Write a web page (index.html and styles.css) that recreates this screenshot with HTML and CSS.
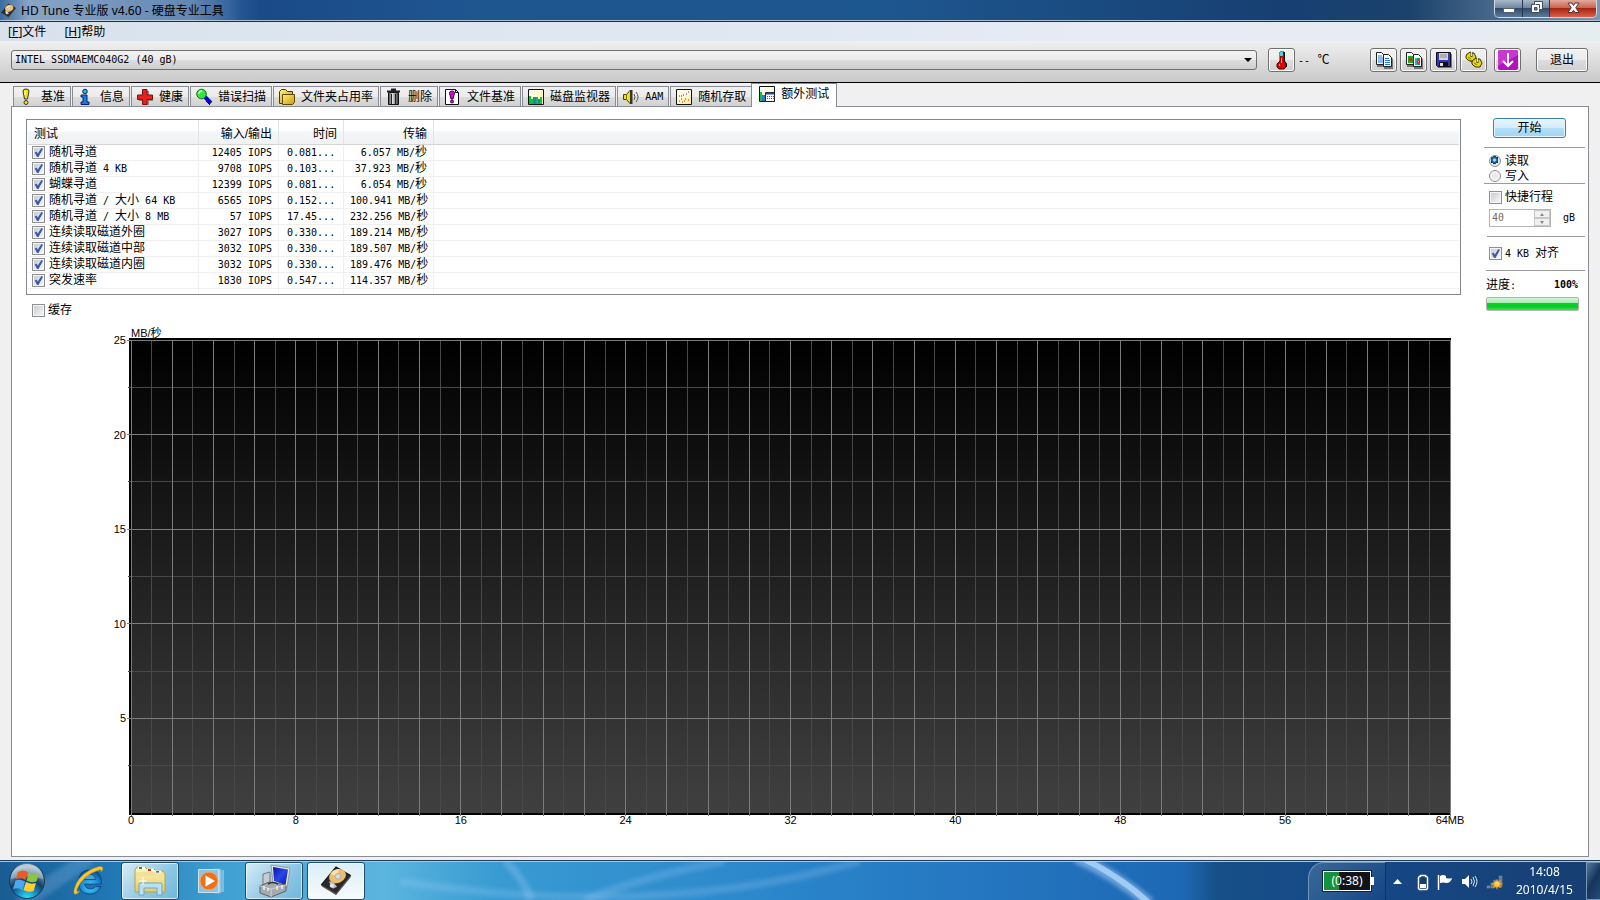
FILE: index.html
```html
<!DOCTYPE html>
<html lang="zh-CN">
<head>
<meta charset="utf-8">
<title>HD Tune 专业版 v4.60</title>
<link rel="stylesheet" href="styles.css">
</head>
<body>
<svg class="defs" width="0" height="0" aria-hidden="true">
  <defs>
    <linearGradient id="gold" x1="0" y1="0" x2="1" y2="1"><stop offset="0" stop-color="#fff27a"/><stop offset="1" stop-color="#c99a10"/></linearGradient>
    <linearGradient id="cream" x1="0" y1="0" x2="1" y2="1"><stop offset="0" stop-color="#fff"/><stop offset="1" stop-color="#ffef9a"/></linearGradient>
    <linearGradient id="steel" x1="0" y1="0" x2="1" y2="0"><stop offset="0" stop-color="#444"/><stop offset=".4" stop-color="#ddd"/><stop offset="1" stop-color="#333"/></linearGradient>
    <linearGradient id="plotfill" x1="0" y1="0" x2="0" y2="1"><stop offset="0" stop-color="#000"/><stop offset="1" stop-color="#404040"/></linearGradient>
    <radialGradient id="orb" cx=".5" cy="1" r=".9"><stop offset="0" stop-color="#2fe4ff"/><stop offset=".4" stop-color="#1579ad"/><stop offset=".6" stop-color="#123f68"/><stop offset="1" stop-color="#9db7c8"/></radialGradient>
    <radialGradient id="ie" cx=".5" cy=".7" r=".7"><stop offset="0" stop-color="#52d0fa"/><stop offset=".6" stop-color="#1884d0"/><stop offset="1" stop-color="#0b4a90"/></radialGradient>
    <linearGradient id="screen" x1="0" y1="0" x2="1" y2="1"><stop offset="0" stop-color="#0613a8"/><stop offset=".5" stop-color="#2a48e8"/><stop offset="1" stop-color="#0613a8"/></linearGradient>
    <linearGradient id="folder" x1="0" y1="0" x2="0" y2="1"><stop offset="0" stop-color="#fdf6c0"/><stop offset="1" stop-color="#e8ca62"/></linearGradient>
    <filter id="soft" x="-20%" y="-50%" width="140%" height="200%"><feGaussianBlur stdDeviation="2"/></filter>
    <symbol id="disk" viewBox="0 0 30 28">
      <path d="M15 1 29 9 15 27 1 18z" fill="#2a2a2c" stroke="#111"/>
      <path d="M1 18v1.500l14 8.500 14-17V9L15 26z" fill="#555"/>
      <ellipse cx="16.500" cy="10" rx="8.500" ry="6.500" transform="rotate(-25 16 10)" fill="#f0bd70"/>
      <path d="M10 8a9 7 0 0 1 8-5l-2 7z" fill="#fbe1b2"/>
      <circle cx="17" cy="10" r="2.800" fill="#d8d8d8" stroke="#999" stroke-width=".6"/>
      <path d="M8 15l4 0 4 5-4 2z" fill="#bbb"/>
      <circle cx="11" cy="19" r="2" fill="#e8e8e8"/>
    </symbol>
  </defs>
</svg>

<header class="titlebar">
  <div class="title"><svg width="15" height="15"><use href="#disk"/></svg><h1>HD Tune 专业版 v4.60 - 硬盘专业工具</h1></div>
  <div class="winbtns">
    <button type="button" aria-label="最小化" class="min"><svg width="12" height="12"><rect x=".5" y="6.500" width="11" height="4" fill="#fff" stroke="#555d70"/></svg></button>
    <button type="button" aria-label="还原" class="res"><svg width="13" height="13"><path d="M4.500.5h8v8h-3v3h-8v-8h3z" fill="#fff" stroke="#434a5d"/><path d="M4.500 6.500h2.500v2.500h-2.500z" fill="#6c7c95" stroke="#434a5d"/><path d="M5.500 3.500h4v4" fill="none" stroke="#434a5d"/></svg></button>
    <button type="button" aria-label="关闭" class="cls"><svg width="13" height="12"><path d="M1 1h4l1.500 2.500L8 1h4L8.800 5.800 12 10.500H8L6.500 8.200 5 10.500H1l3.200-4.700z" fill="#fff" stroke="#5a3030"/></svg></button>
  </div>
</header>

<nav class="menu"><a href="#file">[<u>F</u>]文件</a><a href="#help">[<u>H</u>]帮助</a></nav>

<section class="toolbar">
  <div class="drive"><select class="m" aria-label="驱动器"><option>INTEL SSDMAEMC040G2 (40 gB)</option></select></div>
  <button type="button" class="tool" aria-label="温度"><svg width="16" height="20"><path d="M6 2h4v9l2 3v3l-2 2H5l-2-2v-3l3-3z" fill="#d80808" stroke="#400"/><path d="M6 2h3v4H6z" fill="#39d8e0"/><path d="M10.500 2v9l2 3v3" fill="none" stroke="#000"/><path d="M7.500 8v5M5.500 14v2" stroke="#ff8d80"/></svg></button>
  <span class="temp"><span class="m">--</span> ℃</span>
  <div class="tools">
    <button type="button" class="tool" aria-label="复制文本"><svg width="18" height="18"><path d="M2 3h6l3 3v10H2z" fill="#777"/><path d="M1.500 1.500h5l3 3v9h-8z" fill="#fff" stroke="#222"/><path d="M3 5h4M3 7h5M3 9h5M3 11h5" stroke="#1878e8"/><path d="M9 5h6l3 3v10H9z" fill="#777"/><path d="M8.500 3.500h5l3 3v9h-8z" fill="#fff" stroke="#222"/><path d="M10 7.500h4M10 9.500h5M10 11.500h5M10 13.500h5" stroke="#1878e8"/></svg></button>
    <button type="button" class="tool" aria-label="复制图像"><svg width="18" height="18"><path d="M2 3h6l3 3v10H2z" fill="#777"/><path d="M1.500 1.500h5l3 3v9h-8z" fill="#fff" stroke="#222"/><path d="M3 5h5v7H3z" fill="#10b020"/><path d="M4 7h3v3H4z" fill="#f02010"/><path d="M9 5h6l3 3v10H9z" fill="#777"/><path d="M8.500 3.500h5l3 3v9h-8z" fill="#fff" stroke="#222"/><path d="M10 7h5v7h-5z" fill="#10b020"/><path d="M10 7h2v7h-2z" fill="#28a8e8"/><path d="M12 9h3v3h-3z" fill="#f02010"/><path d="M13 10h1v1h-1z" fill="#ff0"/></svg></button>
    <button type="button" class="tool" aria-label="保存"><svg width="18" height="18"><path d="M3 3h14v14H3z" fill="#777"/><path d="M1.500 1.500h14v14h-13l-1-1z" fill="#3138c8" stroke="#111"/><path d="M4 2h9v7H4z" fill="#d4d4cc"/><path d="M5 4h7M5 6h7" stroke="#888"/><path d="M4 11h9v5H4z" fill="#111"/><path d="M5 12h3v3H5z" fill="#ddd"/></svg></button>
    <button type="button" class="tool" aria-label="选项"><svg width="18" height="18"><path d="M3 8l6 6 6 2 2-3-6-6z" fill="#777"/><g fill="#e6d800" stroke="#3a3500"><path d="M2 3l2-1 1-1 2 1 2 0 1 2 1 2-1 2-1 2-2 0-2 0-2-1-2-2 0-2z"/><path d="M8 9l2-1 1-1 2 1 2 0 1 2 1 2-1 2-1 2-2 0-2 0-2-1-2-2 0-2z"/></g><path d="M6.500 1v5M12.500 7v5" stroke="#444" stroke-width="2"/><path d="M6.500 1v4M12.500 7v4" stroke="#ddd"/><path d="M3 6l3 2M9 12l3 2" stroke="#8a8000"/></svg></button>
    <button type="button" class="tool update" aria-label="更新"><svg width="20" height="20"><rect width="20" height="20" rx="2" fill="#b511bd"/><path d="M0 0h20v5L0 16z" fill="#d455d8" opacity=".6"/><path d="M10 3v12M5 11l5 5 5-5" fill="none" stroke="#fff" stroke-width="2"/></svg></button>
    <button type="button" class="tool exit">退出</button>
  </div>
</section>

<nav class="tabs">
  <button type="button"><svg width="16" height="18"><path d="M4 3q0-2 3-2t3 2L8.500 11h-3z" fill="#f0e800" stroke="#333"/><path d="M6 3v4" stroke="#fff"/><circle cx="7" cy="14.500" r="2" fill="#f0e800" stroke="#333"/></svg>基准</button>
  <button type="button"><svg width="16" height="18"><path d="M4 7h5v7h2v2.500H3V14h2V9H3V7z" fill="#1478f0" stroke="#102060"/><circle cx="7" cy="3.500" r="2.300" fill="#18b8e8" stroke="#102060"/></svg>信息</button>
  <button type="button"><svg width="16" height="18"><path d="M7 3h5v5h4v5h-4v4H7v-4H2V8h5z" fill="#888"/><path d="M5.500 1.500H10V7h5.500v4.500H10v5H5.500v-5H.500V7h5z" fill="#ea2020" stroke="#801010"/></svg>健康</button>
  <button type="button"><svg width="16" height="18"><path d="M9 9l6 6" stroke="#0808c0" stroke-width="4"/><path d="M10 13l4 4" stroke="#111"/><circle cx="5.500" cy="6" r="4.800" fill="#30e838" stroke="#187020"/><path d="M3 6q0-3 3-3" stroke="#d8ffe0" fill="none" stroke-width="1.500"/></svg>错误扫描</button>
  <button type="button"><svg width="16" height="18"><path d="M.500 15.500v-12l2-2h4l2 2h5v12z" fill="url(#gold)" stroke="#4c3b00"/><path d="M3.500 16.500v-10h12v8l-2 2z" fill="url(#gold)" stroke="#5a4800"/></svg>文件夹占用率</button>
  <button type="button"><svg width="16" height="18"><path d="M2.500 4.500h10v12h-10z" fill="url(#steel)" stroke="#111"/><path d="M1 3.500h13M5 1.500h5" stroke="#222" stroke-width="2"/><path d="M5.500 6v10M9.500 6v10" stroke="#222"/></svg>删除</button>
  <button type="button"><svg width="16" height="18"><path d="M.500 1.500h10l3 3v12H.500z" fill="#fff" stroke="#111"/><path d="M10.500 1.500v3h3" fill="none" stroke="#111"/><path d="M4.500 5q0-2 2.500-2t2.500 2L8 11H6z" fill="#d010d0" stroke="#400040"/><circle cx="7" cy="13.500" r="1.500" fill="#d010d0" stroke="#400040"/></svg>文件基准</button>
  <button type="button"><svg width="16" height="18"><path d="M.500 1.500h15v15H.500z" fill="url(#cream)" stroke="#111"/><path d="M1 8h2v8H1zM3 11h2v5H3zM8 9h2v7H8zM12 9h2v7h-2z" fill="#00c838"/><path d="M5 9h3v7H5zM10 11h2v5h-2z" fill="#3878c0"/></svg>磁盘监视器</button>
  <button type="button"><svg width="16" height="18"><path d="M.500 6.500h3l4-4.500v14l-4-4.500h-3z" fill="#f0e020" stroke="#4a4000"/><path d="M8.500 2v14" stroke="#333" stroke-width="2"/><path d="M3.500 7v4" stroke="#806c00"/><path d="M11 6q2 3 0 6M13 4q4 5 0 10" stroke="#555" fill="none"/></svg><span class="m">AAM</span></button>
  <button type="button"><svg width="16" height="18"><path d="M.500 1.500h15v15H.500z" fill="url(#cream)" stroke="#111"/><path d="M3 13h1M6 14h1M5 11h1M9 11h1M8 13h1M12 12h1" stroke="#e01010"/><path d="M3 8h1M7 7h1M10 6h1M12 4h1M5 8h1" stroke="#2030e0"/></svg>随机存取</button>
  <button type="button" class="active"><svg width="16" height="18"><path d="M.500 1.500h15v15H.500z" fill="url(#cream)" stroke="#111"/><path d="M1 7h2v9H1z" fill="#00c838"/><path d="M3 10h3v6H3z" fill="#3878c0"/><path d="M6.500 7.500h9v9h-9z" fill="#fff" stroke="#222"/><path d="M7 8.500h8" stroke="#2040c0" stroke-width="2"/><path d="M8 11.500h7M8 13.500h7" stroke="#d02020" stroke-dasharray="1 1"/></svg>额外测试</button>
</nav>

<main class="panel">
  <div class="left">
    <div class="list">
      <table>
        <colgroup><col class="c1"><col class="c2"><col class="c3"><col class="c4"><col></colgroup>
        <thead><tr><th>测试</th><th>输入/输出</th><th>时间</th><th>传输</th><th></th></tr></thead>
        <tbody>
        <tr><td><label><input type="checkbox" checked><span>随机寻道</span></label></td><td>12405 IOPS</td><td>0.081...</td><td>6.057 MB/<b>秒</b></td><td></td></tr>
        <tr><td><label><input type="checkbox" checked><span>随机寻道<span class="m"> 4 KB</span></span></label></td><td>9708 IOPS</td><td>0.103...</td><td>37.923 MB/<b>秒</b></td><td></td></tr>
        <tr><td><label><input type="checkbox" checked><span>蝴蝶寻道</span></label></td><td>12399 IOPS</td><td>0.081...</td><td>6.054 MB/<b>秒</b></td><td></td></tr>
        <tr><td><label><input type="checkbox" checked><span>随机寻道<span class="m"> / </span>大小<span class="m"> 64 KB</span></span></label></td><td>6565 IOPS</td><td>0.152...</td><td>100.941 MB/<b>秒</b></td><td></td></tr>
        <tr><td><label><input type="checkbox" checked><span>随机寻道<span class="m"> / </span>大小<span class="m"> 8 MB</span></span></label></td><td>57 IOPS</td><td>17.45...</td><td>232.256 MB/<b>秒</b></td><td></td></tr>
        <tr><td><label><input type="checkbox" checked><span>连续读取磁道外圈</span></label></td><td>3027 IOPS</td><td>0.330...</td><td>189.214 MB/<b>秒</b></td><td></td></tr>
        <tr><td><label><input type="checkbox" checked><span>连续读取磁道中部</span></label></td><td>3032 IOPS</td><td>0.330...</td><td>189.507 MB/<b>秒</b></td><td></td></tr>
        <tr><td><label><input type="checkbox" checked><span>连续读取磁道内圈</span></label></td><td>3032 IOPS</td><td>0.330...</td><td>189.476 MB/<b>秒</b></td><td></td></tr>
        <tr><td><label><input type="checkbox" checked><span>突发速率</span></label></td><td>1830 IOPS</td><td>0.547...</td><td>114.357 MB/<b>秒</b></td><td></td></tr>
        <tr class="rest"><td></td><td></td><td></td><td></td><td></td></tr>
        </tbody>
      </table>
    </div>
    <label class="cache"><input type="checkbox">缓存</label>
    <div class="chart">
      <div class="unit">MB/秒</div>
      <div class="plot"><svg id="plot" role="img" aria-label="传输速率图"><rect width="100%" height="100%" fill="url(#plotfill)"/></svg></div>
    </div>
  </div>
  <aside class="side">
    <button type="button" class="start">开始</button>
    <div class="group radios">
      <label><input type="radio" name="mode" checked>读取</label>
      <label><input type="radio" name="mode">写入</label>
    </div>
    <div class="group stroke">
      <label><input type="checkbox">快捷行程</label>
      <div class="size m"><span class="spin"><input type="text" value="40" aria-label="容量" disabled><span class="arrows"><button type="button" aria-label="增加" disabled></button><button type="button" aria-label="减少" disabled></button></span></span><span>gB</span></div>
    </div>
    <div class="group align"><label><input type="checkbox" checked><span><span class="m">4 KB </span>对齐</span></label></div>
    <div class="group prog">
      <div class="row"><span>进度<span class="m">:</span></span><strong class="m">100%</strong></div>
      <div class="bar" role="progressbar" aria-label="进度" aria-valuenow="100"></div>
    </div>
  </aside>
</main>

<footer class="taskbar">
  <svg class="glow" preserveAspectRatio="none" viewBox="0 0 1600 40" aria-hidden="true">
    <g fill="none" stroke="#b8dcff"><g filter="url(#soft)"><path d="M400 21q260 40 460-21" stroke-width="8" opacity=".2"/><path d="M585 40q50-22 140-40" stroke-width="8" opacity=".2"/><path d="M505 0q20 20 26 40" stroke-width="8" opacity=".25"/><path d="M1076-4q40 18 74 48" stroke-width="12" opacity=".5"/><path d="M20 44 90-4" stroke-width="16" opacity=".2"/></g><path d="M1080-4q38 18 70 48" stroke-width="6" opacity=".7"/></g>
  </svg>
  <button type="button" class="orb" aria-label="开始菜单"><svg width="38" height="38" viewBox="0 0 38 38"><circle cx="19" cy="19" r="17.500" fill="url(#orb)" stroke="#143a58"/><path d="M3 17a16 16 0 0 1 32 0q-15-5-32 0z" fill="#fff" opacity=".3"/><path d="M10 10q5-3 10 0l-2.500 8q-4-3-9.500-1z" fill="#ee5a24"/><path d="M21 11q5 3 10 0l-2.500 8.500q-5 2-10-1z" fill="#8cc63c"/><path d="M7.500 18.500q5-2 9.500 1L14.500 28q-4-3-9.500-1z" fill="#4aa8f0"/><path d="M18 20q5 3 10 1l-2.500 8q-5 2-10-1z" fill="#ffd030"/></svg></button>
  <button type="button" class="task plain ie" aria-label="Internet Explorer"><svg width="34" height="34" viewBox="0 0 34 34"><path d="M29.500 20H12.500q1 5 6 5 3.500 0 5-2.500h5.500Q26 30 18 30 6.500 30 6.500 18T18 6q12 0 11.500 14z" fill="url(#ie)" stroke="#083a78" stroke-width=".7"/><path d="M12.500 15.500h11q-.800-5-5.500-5t-5.500 5z" fill="#48a5d8" stroke="#083a78" stroke-width=".7"/><path d="M8 27Q1 34 2 26 5 13 18 6q12-6 13-2 0 2-2 4 1-3-2-2Q11 11 5 25q-1 4 3 2z" fill="#f8c62c" stroke="#c98a08" stroke-width=".5"/></svg></button>
  <button type="button" class="task open" aria-label="资源管理器"><svg width="34" height="32" viewBox="0 0 34 32"><path d="M2 27V5l2-3h8l2 2h7l2 2h7l2 3v18z" fill="url(#folder)" stroke="#c0a040"/><path d="M5 3h7M14 5h7M22 7h6" stroke="#fff" stroke-width="3"/><path d="M6 3h3" stroke="#18a030" stroke-width="2"/><path d="M15 5h3" stroke="#d83018" stroke-width="2"/><path d="M23 7h3" stroke="#2080d8" stroke-width="2"/><path d="M3 8h27M3 10h27" stroke="#eed98a"/><path d="M6 30V19q0-1 2-1h19q2 0 2 1v11h-5v-7H11v7z" fill="#b8e2f4" stroke="#68a8cc"/><path d="M10 12v8M6 16h8" stroke="#fff"/></svg></button>
  <button type="button" class="task plain wmp" aria-label="媒体播放器"><svg width="32" height="30" viewBox="0 0 32 30"><path d="M20 4h8v22h-8z" fill="#7cbede"/><path d="M18 3h7v24h-7z" fill="#a8d8f0" stroke="#6cb0d8"/><path d="M2.500 3.500h20v23h-20z" fill="#8cc4e4" stroke="#c4e4f4"/><circle cx="13" cy="15" r="9" fill="#f07018" stroke="#f8a860"/><path d="M9.500 9.500v11L19 15z" fill="#fff"/></svg></button>
  <button type="button" class="task open" aria-label="工具"><svg width="36" height="34" viewBox="0 0 36 34"><path d="M7 10l7-2v12l-7 2z" fill="#c8ccd0" stroke="#777"/><path d="M15 1l19 3-3 20-14-5z" fill="#e4e4e0" stroke="#999"/><path d="M17 3l15 2.500-2.500 15.500L18 17z" fill="url(#screen)"/><path d="M4 22l9-4 17 3v6l-15 6-11-4z" fill="#a4aab0" stroke="#5c6268"/><path d="M4 22l11 3v8M15 25l15-4" stroke="#d0d4d8" fill="none"/><path d="M12 20q5-3 10 0" stroke="#333" fill="none" stroke-width="1.500"/><path d="M8 22v4M12 24v3M21 22v4M26 21v4" stroke="#eee" stroke-width="1.500"/></svg></button>
  <button type="button" class="task open current" aria-label="HD Tune"><svg width="32" height="29"><use href="#disk"/></svg></button>
  <div class="tray">
    <div class="battery"><span>(0:38)</span></div>
    <div class="icons">
      <svg width="9" height="5"><path d="M4.500 0 9 5H0z" fill="#fff"/></svg>
      <svg width="12" height="18"><path d="M3.500 2.500h5v1h1l1 1v11l-1 1h-7l-1-1v-11l1-1h1z" fill="#143c6c" stroke="#fff" stroke-width="1.500"/><path d="M3 11h6v4H3z" fill="#fff"/></svg>
      <svg width="16" height="18"><path d="M1.500 2v15" stroke="#fff" stroke-width="1.500"/><path d="M3 3q3-2 6 0v2q3 1 6 0-1 5-6 5-2-1-6 0z" fill="#fff"/></svg>
      <svg width="17" height="18"><path d="M1 6h3l4-4v13l-4-4H1z" fill="#fff"/><path d="M10 6q2 3 0 5M12 4q3 4.500 0 9M14 3q4 5.500 0 11" fill="none" stroke="#dce8f4"/></svg>
      <svg width="17" height="18"><path d="M1 15h3v-2H1zM5 15h3v-5H5zM9 14h3V7H9zM13 14h3V3h-3z" fill="#68788c" stroke="#8a98a8" stroke-width=".5"/><path d="M11 6l1 2.500L15 7l-1 2.500 3 1.500-3 1 1 3-3-1-1 3-1-3-3 1 1-3-3-1 3-1.500L7 7l3 1.500z" fill="#f6a010"/><circle cx="11" cy="11" r="2.500" fill="#ffd060"/></svg>
    </div>
    <div class="clock"><time>14:08</time><time>2010/4/15</time></div>
    <button type="button" class="desk" aria-label="显示桌面"></button>
  </div>
</footer>
<script src="chart.js"></script>
</body>
</html>
```
FILE: styles.css
```css
* { box-sizing: border-box; }
body {
  margin: 0; height: 100vh; min-height: 600px; display: flex; flex-direction: column;
  background: #f0f0f0; color: #000;
  font: 12px/16px "Liberation Sans", "Noto Sans CJK SC", sans-serif;
}
button, input, select { font: inherit; color: inherit; margin: 0; padding: 0; }
svg { display: block; flex: none; }
.defs { position: absolute; }
.m { font-family: "DejaVu Sans Mono", "Noto Sans CJK SC", monospace; font-size: 10px; white-space: pre; }

.titlebar {
  display: flex; justify-content: space-between; height: 22px; flex: none;
  background: linear-gradient(90deg, #3c6ba0 0, #2c5c98 230px, #1a4a88 260px, #1e5690 30%, #1d578f 55%, #173f72 80%, #1b426c 88%, #7f97ae 100%);
  border-bottom: 1px solid #1c2c44; box-shadow: inset 0 -1px #a9bfd4;
  font-family: "Noto Sans", "Noto Sans CJK SC", sans-serif;
}
.title { display: flex; align-items: center; gap: 5px; padding: 0 16px 0 1px; background: linear-gradient(90deg, #fff0, #ffffff66 12%, #ffffff40 80%, #fff0); }
.title h1 { margin: 0; font-size: 12px; font-weight: 400; }
.winbtns { display: flex; height: 18px; margin-right: 3px; border: 1px solid #cfdae4; border-top: 0; border-radius: 0 0 5px 5px; overflow: hidden; }
.winbtns button { display: grid; place-items: center; border: 0; border-right: 1px solid #26374c; padding-bottom: 2px; background: linear-gradient(#a9b9c9, #7188a0 45%, #304c6c 50%, #5c7a98); }
.min { width: 28px; }
.res { width: 27px; }
.winbtns .cls { width: 46px; border: 0; background: linear-gradient(#e3a99d, #c96650 45%, #a82412 50%, #d86048); }

.menu { display: flex; gap: 18px; height: 19px; flex: none; padding: 2px 8px 0; background: linear-gradient(90deg, #d9e2ec, #e6ebf4 70%, #e6edf0); font-family: "Noto Sans", "Noto Sans CJK SC", sans-serif; }
.menu a { color: #000; text-decoration: none; }

.toolbar { display: flex; align-items: center; height: 42px; flex: none; padding: 0 12px 4px 11px; background: linear-gradient(#f0f0f0, #c9c9c9); border-bottom: 1px solid #000; }
.drive { position: relative; flex: 1; }
.drive select { appearance: none; display: block; width: 100%; height: 20px; padding: 0 3px; border: 1px solid #707070; border-radius: 3px; background: linear-gradient(#f2f2f2, #ebebeb 50%, #dddddd 50%, #cfcfcf); }
.drive::after { content: ""; position: absolute; right: 5px; top: 8px; border: 4px solid transparent; border-top-color: #000; border-bottom: 0; pointer-events: none; }
.tool { display: grid; place-items: center; width: 27px; height: 24px; border: 1px solid #707070; border-radius: 3px; background: linear-gradient(#f2f2f2, #ebebeb 50%, #dddddd 50%, #cfcfcf); box-shadow: inset 0 0 0 1px #fcfcfc; }
.drive + .tool { margin-left: 11px; }
.temp { width: 72px; margin-left: 3px; padding-top: 1px; }
.temp .m { margin-right: 4px; }
.tools { display: flex; gap: 3px; }
.update { margin-left: 4px; }
.exit { width: 52px; margin-left: 12px; }

.tabs { display: flex; align-items: flex-end; gap: 1px; height: 24px; flex: none; padding-left: 13px; position: relative; z-index: 1; margin-bottom: -1px; }
.tabs button { display: flex; align-items: center; gap: 6px; height: 21px; padding: 0 5px; border: 1px solid #898c95; background: linear-gradient(#f2f2f2, #ebebeb 50%, #dddddd 50%, #d2d2d2); white-space: nowrap; }
.tabs .active { height: 24px; padding: 0 7px 3px; margin-left: -2px; border-bottom: 0; background: #fff; }

.panel { flex: 1; min-height: 0; display: flex; gap: 23px; margin: 0 11px 3px 11px; padding: 12px 2px 0 14px; border: 1px solid #898c95; background: #fff; }
.left { flex: 1; min-width: 0; display: flex; flex-direction: column; }
.list { border: 1px solid #828790; padding: 0 1px; }
table { width: 100%; border-collapse: separate; border-spacing: 0; table-layout: fixed; }
.c1 { width: 171px; } .c2 { width: 80px; } .c3 { width: 65px; } .c4 { width: 90px; }
th { height: 25px; padding: 4px 6px 0; font-weight: 400; text-align: right; border-right: 1px solid #e2e4e8; border-bottom: 1px solid #d5d5d5; background: linear-gradient(#fff 45%, #f4f5f7 50%, #f1f2f4); }
th:first-child { text-align: left; }
td { height: 16px; padding: 0 6px; line-height: 15px; text-align: right; border-right: 1px solid #f0f0f0; border-bottom: 1px solid #f0f0f0; white-space: nowrap; font-family: "DejaVu Sans Mono", "Noto Sans CJK SC", monospace; font-size: 10px; }
td b { font-weight: 400; font-size: 12px; line-height: 15px; }
td:nth-child(3) { padding: 0 8px; }
td:first-child { padding: 0 4px; text-align: left; font-size: 12px; }
td:last-child, th:last-child { border-right: 0; }
.rest td { height: 5px; border-bottom: 0; }
label { display: flex; align-items: center; gap: 3px; }
td label { height: 15px; gap: 4px; }
input[type=checkbox] { appearance: none; position: relative; flex: none; width: 13px; height: 13px; border: 1px solid #8e8f8f; background: linear-gradient(135deg, #c9ccd2, #f6f6f6) content-box, #f4f4f4; padding: 1px; }
input[type=checkbox]:checked::after { content: ""; position: absolute; inset: 1px; background: #3f5aa8; clip-path: polygon(8% 50%, 28% 38%, 42% 62%, 82% 0, 100% 8%, 50% 100%, 34% 100%); }
.cache { margin: 7px 0 0 6px; align-self: flex-start; }

.chart { flex: 1; min-height: 0; display: flex; flex-direction: column; margin: 8px 10px 41px 103px; }
.unit { height: 12px; padding-left: 2px; font-size: 11px; line-height: 14px; }
.plot { flex: 1; min-height: 0; display: flex; background: #000; padding: 2px 1px 2px 2px; }
.plot svg { width: 100%; height: 100%; overflow: visible; }
.plot line { stroke: #484848; stroke-width: 1; shape-rendering: crispEdges; }
.plot .major { stroke: #7c7c7c; }
.plot text { font: 11px "Liberation Sans", sans-serif; text-anchor: middle; }
.plot .y { text-anchor: end; }

.side { width: 101px; flex: none; margin-right: 1px; }
.start { display: block; width: 73px; height: 20px; margin: -1px 0 9px 9px; border: 1px solid #3c7fb1; border-radius: 3px; background: linear-gradient(#e6f5fd, #d2ecfb 50%, #b4e0f7 50%, #9fd5f3); box-shadow: inset 0 0 0 1px #e8f7fe; line-height: 16px; }
.group { border-top: 1px solid #9c9c9c; }
.radios { height: 36px; padding: 5px 5px 0; }
.radios label { height: 15px; gap: 4px; }
input[type=radio] { appearance: none; width: 12px; height: 12px; border: 1px solid #8e8f8f; border-radius: 50%; background: radial-gradient(#e4e4e4, #fff); }
input[type=radio]:checked { background: radial-gradient(circle at 45% 40%, #8fe0ff 0 1px, #1879b0 2px, #0d2f4c 4px, #e4e4e4 4px); }
.stroke { height: 53px; padding: 5px 5px 0; }
.size { display: flex; align-items: center; gap: 12px; margin-top: 4px; }
.spin { display: flex; width: 62px; height: 18px; border: 1px solid #b4b4b4; background: #fff; }
.spin input { flex: 1; min-width: 0; border: 0; padding: 0 2px; background: none; color: #6d6d6d; }
.arrows { display: flex; flex-direction: column; width: 16px; }
.arrows button { display: grid; place-items: center; flex: 1; border: 1px solid #c8c8c8; background: #f0f0f0; }
.arrows button::after { content: ""; border: 2px solid transparent; border-top: 0; border-bottom: 3px solid #888; }
.arrows button + button::after { transform: rotate(180deg); }
.align { height: 34px; margin-left: 3px; padding: 8px 2px 0; }
.prog { margin-left: 2px; padding-top: 6px; }
.row { display: flex; justify-content: space-between; width: 92px; height: 20px; }
.bar { width: 93px; height: 14px; border: 1px solid #b2b2b2; border-radius: 2px; background: linear-gradient(#d2f5d6, #a8eeb0 40%, #06d325 45%, #0cc828 75%, #3be855); }

.taskbar { position: relative; display: flex; align-items: center; height: 40px; flex: none; padding-left: 8px; border-top: 1px solid #1f3c58; box-shadow: inset 0 1px #a4c8e4;
  background: linear-gradient(90deg, #195c94 0, #2078b4 7%, #3fa0d2 14%, #5bb5de 24%, #389bd2 31%, #2a84ca 50%, #2272bc 65%, #1d68b4 74%, #165088 76%, #164886 85%, #163f72 100%); }
.glow { position: absolute; inset: 0; width: 100%; height: 100%; }
.taskbar button { position: relative; border: 0; background: none; }
.orb { width: 38px; }
.task { display: grid; place-items: center; width: 58px; height: 38px; }
.open { border-radius: 3px; }
.taskbar .open { border: 1px solid #1d4c70; background: linear-gradient(135deg, #d8ecf6, #8cc6e4 60%, #70b8dc); box-shadow: inset 0 0 0 1px #ffffffa0; }
.taskbar .current { margin-left: 4px; background: linear-gradient(#dceef6, #f6fbfd); }
.ie { margin: 0 3px 0 14px; }
.wmp { width: 66px; }
.tray { position: relative; display: flex; align-items: center; height: 39px; margin-left: auto; color: #fff; font-family: "Noto Sans", sans-serif; }
.battery { display: flex; align-items: center; height: 38px; width: 78px; padding-left: 14px; border-left: 1px solid #6f95bb; border-top: 1px solid #6f95bb; border-right: 1px solid #10345c; border-radius: 16px 0 0 0; background: linear-gradient(135deg, #5f86ae80, #fff0); }
.battery span { position: relative; width: 48px; height: 20px; border: 1px solid #fff; outline: 1px solid #0c2440; background: linear-gradient(90deg, #14923c 32%, #101418 32%); text-align: center; line-height: 18px; }
.battery span::after { content: ""; position: absolute; right: -4px; top: 5px; width: 3px; height: 8px; background: #fff; }
.icons { display: flex; align-items: center; gap: 8px; padding: 2px 0 0 7px; }
.icons svg:first-child { margin-right: 7px; }
.clock { width: 83px; text-align: center; }
.clock time { display: block; line-height: 18px; }
.desk { width: 14px; height: 38px; }
.tray .desk { border: 1px solid #7894b4; border-right: 0; background: linear-gradient(120deg, #54779c, #14345c 50%, #254c78); }
```
FILE: chart.js
```javascript
const plot = document.getElementById('plot');

function add(name, attrs, text) {
  const el = document.createElementNS('http://www.w3.org/2000/svg', name);
  for (const key in attrs) el.setAttribute(key, attrs[key]);
  if (text) el.textContent = text;
  plot.appendChild(el);
  return el;
}

function grid(major) {
  for (let i = major ? 0 : 1; i <= 64; i += 2) {
    const x = i / 64 * 100 + '%';
    add('line', { x1: x, x2: x, y1: 0, y2: '100%', class: major ? 'major' : '' });
    add('svg', { x: x, y: '100%', overflow: 'visible' })
      .innerHTML = `<line y2="${major ? 3 : 2}" class="${major ? 'major' : ''}"/>`;
  }
  for (let i = major ? 0 : 1; i < 10; i += 2) {
    const y = i * 10 + '%';
    add('line', { x1: major ? -4 : -3, x2: '100%', y1: y, y2: y, class: major ? 'major' : '' });
  }
}

grid(false);
grid(true);

for (let v = 0; v <= 64; v += 8) {
  add('text', { x: v / 64 * 100 + '%', y: '100%', dy: 11 }, v === 64 ? '64MB' : String(v));
}
for (let v = 5; v <= 25; v += 5) {
  add('text', { x: -5, y: 100 - v * 4 + '%', dy: 4, class: 'y' }, String(v));
}
```
